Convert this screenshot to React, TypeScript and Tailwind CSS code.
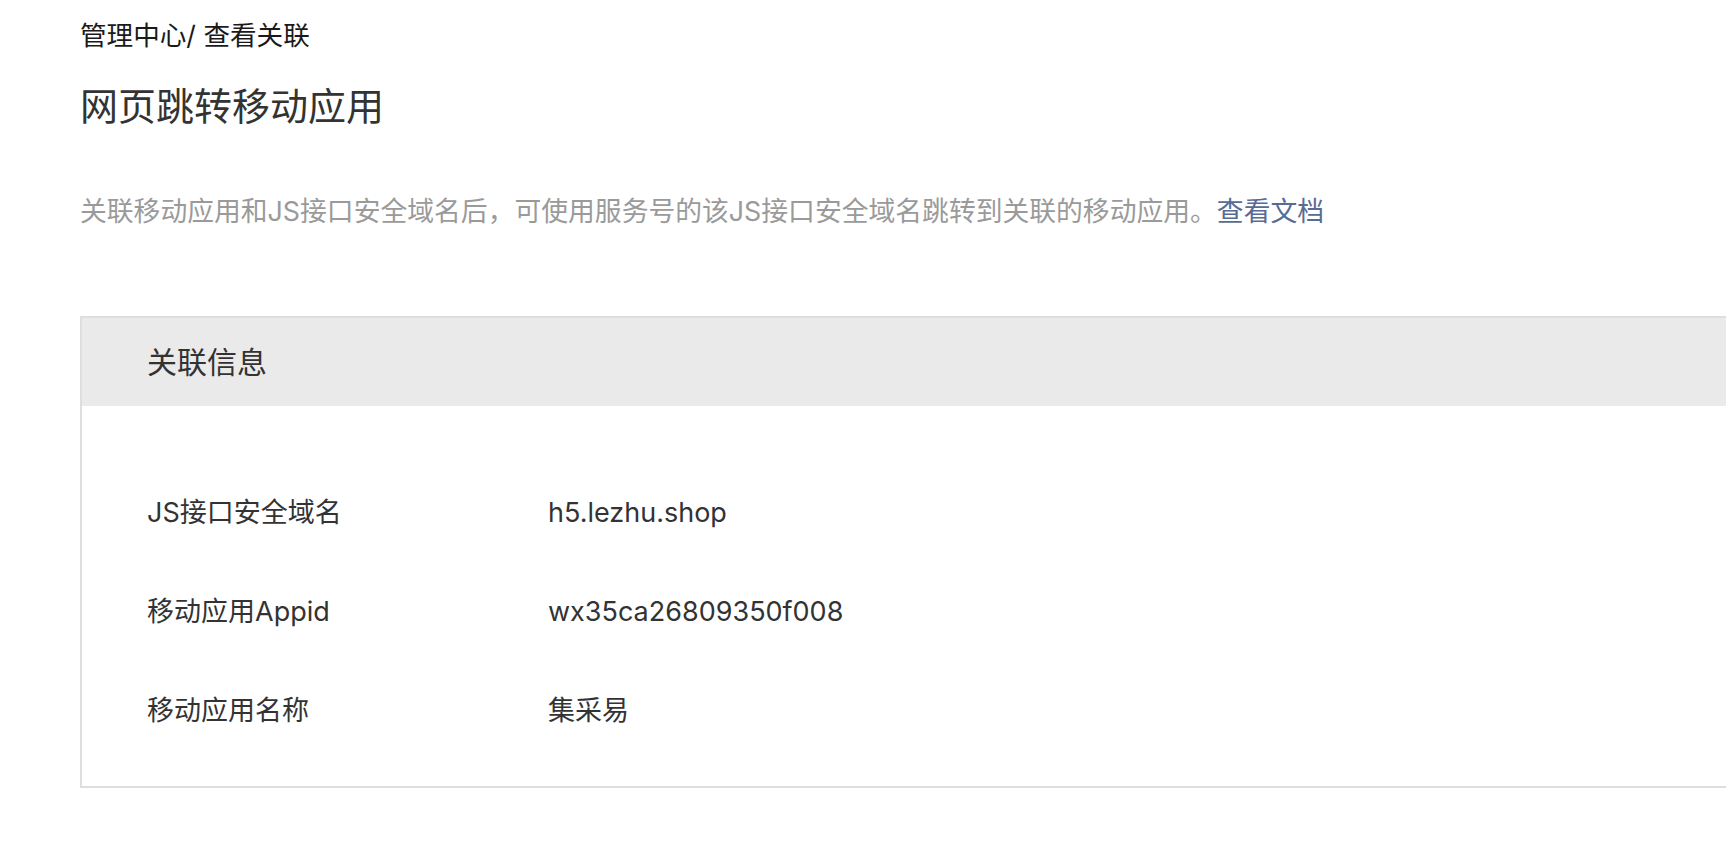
const rows = [
  { label: "JS接口安全域名", value: "h5.lezhu.shop" },
  { label: "移动应用Appid", value: "wx35ca26809350f008" },
  { label: "移动应用名称", value: "集采易" },
];

export default function App() {
  return (
    <div
      className="w-full h-[842px] overflow-hidden bg-white"
      style={{ fontFamily: 'Inter, "Noto Sans CJK SC", sans-serif' }}
    >
      <div className="pl-[80px] pt-[17px]">
        {/* breadcrumb */}
        <div className="text-[26.6px] leading-[36px] text-[#1a1a1a]">管理中心/ 查看关联</div>

        {/* title */}
        <h1 className="mt-[27px] text-[38px] leading-[52px] text-[#333]">网页跳转移动应用</h1>

        {/* description */}
        <p className="mt-[59px] text-[26.8px] leading-[40px] text-[#9a9a9a]">
          关联移动应用和JS接口安全域名后，可使用服务号的该JS接口安全域名跳转到关联的移动应用。
          <a href="#" className="text-[#576b95]">查看文档</a>
        </p>

        {/* panel */}
        <div className="mt-[85px] w-[1700px] border-2 border-[#dedede]">
          <div className="h-[88px] bg-[#eaeaea] pl-[65px] flex items-center">
            <span className="text-[30px] text-[#333]">关联信息</span>
          </div>
          <div className="pt-[58px] pb-[25px] pl-[65px] bg-white">
            {rows.map((row) => (
              <div key={row.label} className="h-[99px] flex items-center text-[27px] text-[#333]">
                <div className="w-[401px]">{row.label}</div>
                <div>{row.value}</div>
              </div>
            ))}
          </div>
        </div>
      </div>
    </div>
  );
}
